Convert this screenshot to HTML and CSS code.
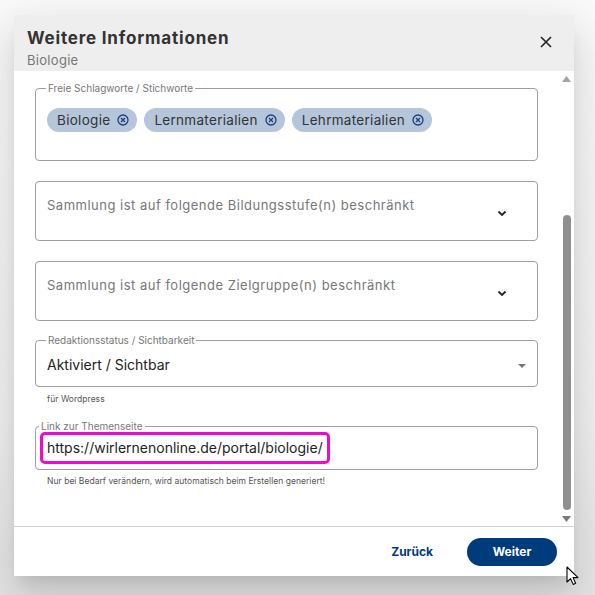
FILE: index.html
```html
<!DOCTYPE html>
<html lang="de">

<head>
  <meta charset="UTF-8">
  <meta name="viewport" content="width=device-width, initial-scale=1.0">
  <title>Weitere Informationen</title>
  <link rel="stylesheet" href="styles.css">
</head>

<body>
  <div class="dialog">
    <div class="dialog-header">
      <div class="titles">
        <h2 class="title">Weitere Informationen</h2>
        <div class="subtitle">Biologie</div>
      </div>
      <button class="close" aria-label="Schließen">
        <svg width="12" height="12" viewBox="0 0 12 12"><path d="M1 1L11 11M11 1L1 11" stroke="#222" stroke-width="1.6" fill="none"/></svg>
      </button>
    </div>

    <div class="dialog-body">
      <div class="content">
        <fieldset class="field">
          <legend>Freie Schlagworte / Stichworte</legend>
          <div class="chips">
            <span class="chip">Biologie <svg class="chip-x" viewBox="0 0 12 12"><circle cx="6" cy="6" r="5" /><path d="M4 4L8 8M8 4L4 8" /></svg></span>
            <span class="chip">Lernmaterialien <svg class="chip-x" viewBox="0 0 12 12"><circle cx="6" cy="6" r="5" /><path d="M4 4L8 8M8 4L4 8" /></svg></span>
            <span class="chip">Lehrmaterialien <svg class="chip-x" viewBox="0 0 12 12"><circle cx="6" cy="6" r="5" /><path d="M4 4L8 8M8 4L4 8" /></svg></span>
          </div>
        </fieldset>

        <div class="select-box">
          <span class="placeholder">Sammlung ist auf folgende Bildungsstufe(n) beschränkt</span>
          <svg class="chevron" width="10" height="7" viewBox="0 0 10 7"><path d="M1.5 1.5L5 5L8.5 1.5" /></svg>
        </div>

        <div class="select-box">
          <span class="placeholder">Sammlung ist auf folgende Zielgruppe(n) beschränkt</span>
          <svg class="chevron" width="10" height="7" viewBox="0 0 10 7"><path d="M1.5 1.5L5 5L8.5 1.5" /></svg>
        </div>

        <div class="group group-status">
          <fieldset class="field">
            <legend>Redaktionsstatus / Sichtbarkeit</legend>
            <div class="select-row">
              <span class="value">Aktiviert / Sichtbar</span>
              <svg class="caret" width="8" height="4" viewBox="0 0 8 4"><path d="M0 0H8L4 4Z" /></svg>
            </div>
          </fieldset>
          <div class="hint">für Wordpress</div>
        </div>

        <div class="group group-link">
          <fieldset class="field field-link">
            <legend>Link zur Themenseite</legend>
            <div class="link-row">
              <span class="link-value">https://wirlernenonline.de/portal/biologie/</span>
            </div>
          </fieldset>
          <div class="hint">Nur bei Bedarf verändern, wird automatisch beim Erstellen generiert!</div>
        </div>
      </div>

      <div class="scrollbar">
        <svg width="9" height="6" viewBox="0 0 9 6"><path d="M0 6L4.5 0L9 6Z" fill="#a3a3a3"/></svg>
        <div class="track"><div class="thumb"></div></div>
        <svg width="9" height="6" viewBox="0 0 9 6"><path d="M0 0L4.5 6L9 0Z" fill="#7a7a7a"/></svg>
      </div>
    </div>

    <div class="dialog-footer">
      <button class="btn-text">Zurück</button>
      <button class="btn-primary">Weiter</button>
    </div>
  </div>

  <svg class="cursor" width="14" height="20" viewBox="0 0 14 20">
    <path d="M1 1V16L4.6 12.6L7.2 18.4L9.6 17.3L7.1 11.6H12Z" fill="#fff" stroke="#000" stroke-width="1.1" stroke-linejoin="round"/>
  </svg>
</body>

</html>
```

FILE: styles.css
```css
body {
  margin: 0;
  height: 595px;
  background: linear-gradient(#fafafa, #f2f2f2 70%, #e4e4e4);
  font-family: "Inter", "Open Sans", sans-serif;
  color: #333;
  overflow: hidden;
}

.dialog {
  margin: 15px 0 0 14px;
  width: 560px;
  height: 561px;
  background: #fff;
  display: flex;
  flex-direction: column;
  box-shadow: 0 11px 15px -7px rgba(0, 0, 0, .12), 0 24px 38px 3px rgba(0, 0, 0, .08), 0 9px 46px 8px rgba(0, 0, 0, .07);
}

.dialog-header {
  height: 56px;
  background: #eeeeee;
  display: flex;
  justify-content: space-between;
  padding: 0 22px 0 13px;
  box-sizing: border-box;
}

.title {
  margin: 12px 0 0;
  font-size: 17px;
  font-weight: 700;
  letter-spacing: .8px;
  color: #333;
  line-height: 22px;
}

.subtitle {
  margin-top: 3px;
  font-size: 13px;
  letter-spacing: .3px;
  color: #777;
  line-height: 16px;
}

.close {
  border: 0;
  background: none;
  padding: 0;
  margin-top: 21px;
  height: 12px;
  cursor: pointer;
}

.dialog-body {
  height: 455px;
  display: flex;
  border-bottom: 1px solid #d0d0d0;
}

.content {
  flex: 1;
  padding: 11px 21px 0;
  display: flex;
  flex-direction: column;
  gap: 20px;
}

/* Rahmen mit Beschriftung im Rand */
.field {
  margin: 0;
  border: 1px solid #9e9e9e;
  border-radius: 4px;
  padding: 0 11px;
  min-width: 0;
}

.field legend {
  font-size: 10px;
  color: #777;
  padding: 0 2px;
  margin-left: -1px;
  line-height: 12px;
}

.chips {
  display: flex;
  gap: 7px;
  height: 66px;
  padding-top: 14px;
  box-sizing: border-box;
}

.chip {
  display: inline-flex;
  align-items: center;
  gap: 7px;
  height: 24px;
  padding: 0 8px 0 10px;
  border-radius: 12px;
  background: #b5c6db;
  font-size: 13.5px;
  letter-spacing: .3px;
  color: #333;
}

.chip-x {
  width: 12px;
  height: 12px;
  fill: none;
  stroke: #1f3f79;
  stroke-width: 1.3;
}

.select-box {
  height: 60px;
  border: 1px solid #9e9e9e;
  border-radius: 4px;
  box-sizing: border-box;
  display: flex;
  justify-content: space-between;
  padding: 14px 30px 0 11px;
}

.placeholder {
  font-size: 13px;
  letter-spacing: .5px;
  color: #777;
  line-height: 18px;
}

.chevron {
  margin-top: 14px;
  fill: none;
  stroke: #222;
  stroke-width: 1.8;
}

.group {
  display: flex;
  flex-direction: column;
}

.group-status {
  margin-top: -7px;
}

.group-link {
  margin-top: -4px;
}

.select-row {
  height: 40px;
  display: flex;
  justify-content: space-between;
  align-items: center;
  padding: 0 0 4px 0;
  box-sizing: border-box;
}

.value {
  font-size: 14px;
  color: #222;
}

.caret {
  fill: #777;
  margin-top: 4px;
}

.hint {
  font-size: 8.5px;
  letter-spacing: .03px;
  color: #555;
  padding: 7px 0 0 12px;
  line-height: 10px;
}

.field-link {
  padding: 0 4px;
}

.link-row {
  height: 37px;
}

.link-value {
  display: inline-block;
  height: 32px;
  box-sizing: border-box;
  padding: 0 4px;
  border: 3px solid #ee0ad0;
  border-radius: 5px;
  font-size: 14px;
  line-height: 26px;
  color: #222;
}

.group-link .hint {
  padding-top: 6px;
}

/* Bildlaufleiste rechts vom Inhalt */
.scrollbar {
  width: 15px;
  display: flex;
  flex-direction: column;
  align-items: center;
  padding: 5px 0 4px;
  box-sizing: border-box;
}

.track {
  flex: 1;
  width: 100%;
  display: flex;
  justify-content: center;
  align-items: flex-end;
  padding: 2px 0 6px;
}

.thumb {
  width: 8px;
  height: 295px;
  border-radius: 4px;
  background: #8f8f8f;
}

.dialog-footer {
  flex: 1;
  display: flex;
  justify-content: flex-end;
  align-items: center;
  gap: 22px;
  padding-right: 17px;
}

.btn-text,
.btn-primary {
  font-family: inherit;
  font-size: 12px;
  font-weight: 700;
  border: 0;
  cursor: pointer;
}

.btn-text {
  background: none;
  color: #003b7c;
  padding: 0 12px;
}

.btn-primary {
  width: 90px;
  height: 28px;
  border-radius: 14px;
  background: #003b7c;
  color: #fff;
}

.cursor {
  position: absolute;
  left: 566px;
  top: 566px;
}
```
